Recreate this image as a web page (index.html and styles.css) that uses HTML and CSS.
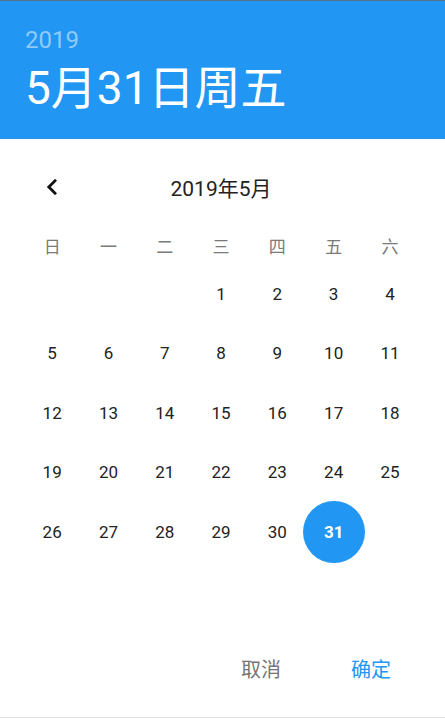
FILE: index.html
```html
<!DOCTYPE html>
<html lang="zh-CN">
<head>
<meta charset="utf-8">
<title>日期选择</title>
<link rel="stylesheet" href="styles.css">
</head>
<body>
<div class="dialog">
  <header class="header">
    <div class="year">2019</div>
    <div class="date">5月31日周五</div>
  </header>
  <section class="picker">
    <div class="nav">
      <button class="prev" aria-label="上个月">
        <svg width="16" height="16" viewBox="0 0 16 16"><path d="M11 1.8 L4.8 8 L11 14.2" fill="none" stroke="#111" stroke-width="2.8" stroke-linecap="square"/></svg>
      </button>
      <div class="month">2019年5月</div>
      <div class="spacer"></div>
    </div>
    <div class="weekdays">
      <span>日</span><span>一</span><span>二</span><span>三</span><span>四</span><span>五</span><span>六</span>
    </div>
    <div class="days">
      <span></span><span></span><span></span>
      <span>1</span><span>2</span><span>3</span><span>4</span>
      <span>5</span><span>6</span><span>7</span><span>8</span><span>9</span><span>10</span><span>11</span>
      <span>12</span><span>13</span><span>14</span><span>15</span><span>16</span><span>17</span><span>18</span>
      <span>19</span><span>20</span><span>21</span><span>22</span><span>23</span><span>24</span><span>25</span>
      <span>26</span><span>27</span><span>28</span><span>29</span><span>30</span><span class="selected"><b>31</b></span><span></span>
    </div>
  </section>
  <footer class="actions">
    <button class="btn cancel">取消</button>
    <button class="btn ok">确定</button>
  </footer>
</div>
</body>
</html>
```
FILE: styles.css
```css
* { box-sizing: border-box; }
html, body { margin: 0; padding: 0; background: #fff; }
body {
  font-family: Roboto, "Noto Sans CJK SC", sans-serif;
  color: #212121;
}
.dialog {
  width: 445px;
  height: 718px;
  display: flex;
  flex-direction: column;
  border-bottom: 1px solid #e2e2e2;
}
.header {
  height: 139px;
  background: #2196f3;
  border-top: 1px solid #56718a;
  padding: 25px 0 0 25px;
  color: #fff;
}
.year {
  font-size: 24px;
  line-height: 28px;
  color: rgba(255, 255, 255, 0.5);
}
.date {
  margin-top: 7px;
  font-size: 46px;
  line-height: 54px;
}
.picker {
  padding: 24px 27px 0 24px;
}
.nav {
  height: 48px;
  display: grid;
  grid-template-columns: 1fr auto 1fr;
  align-items: center;
}
.prev {
  justify-self: start;
  width: 56px;
  height: 48px;
  border: 0;
  background: none;
  padding: 0;
  display: flex;
  align-items: center;
  justify-content: center;
}
.prev svg { display: block; }
.month {
  font-size: 21px;
  color: #222;
}
.weekdays, .days {
  display: grid;
  grid-template-columns: repeat(7, 56.3px);
}
.weekdays {
  margin-top: 16px;
  height: 37px;
  align-items: center;
}
.weekdays span {
  text-align: center;
  font-size: 17px;
  color: #7a7a7a;
}
.days {
  grid-auto-rows: 59.5px;
}
.days span {
  display: flex;
  align-items: center;
  justify-content: center;
  font-size: 17px;
  color: #222;
}
.days .selected b {
  flex: none;
  width: 62px;
  height: 62px;
  border-radius: 50%;
  background: #2196f3;
  color: #fff;
  font-weight: 700;
  display: flex;
  align-items: center;
  justify-content: center;
}
.actions {
  margin-top: auto;
  height: 48px;
  margin-bottom: 25px;
  display: flex;
  justify-content: flex-end;
  align-items: center;
  padding-right: 38px;
  gap: 38px;
}
.btn {
  border: 0;
  background: none;
  font-family: inherit;
  font-size: 20px;
  padding: 0 16px;
  height: 48px;
}
.cancel { color: #757575; }
.ok { color: #2196f3; }
```
